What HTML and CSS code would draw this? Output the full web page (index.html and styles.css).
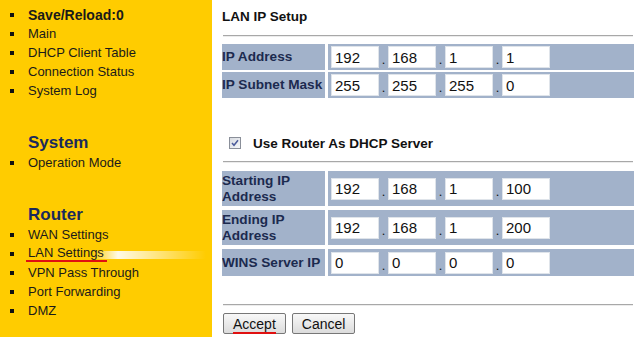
FILE: index.html
```html
<!DOCTYPE html>
<html lang="en">
<head>
  <meta charset="UTF-8">
  <title>LAN Settings</title>
  <link rel="stylesheet" href="styles.css">
</head>
<body>
  <div class="menu">
    <ul class="grupo">
      <li class="save">Save/Reload:0</li>
      <li>Main</li>
      <li>DHCP Client Table</li>
      <li>Connection Status</li>
      <li>System Log</li>
    </ul>
    <h3>System</h3>
    <ul class="grupo">
      <li>Operation Mode</li>
    </ul>
    <h3>Router</h3>
    <ul class="grupo">
      <li>WAN Settings</li>
      <li class="ativo"><span>LAN Settings</span></li>
      <li>VPN Pass Through</li>
      <li>Port Forwarding</li>
      <li>DMZ</li>
    </ul>
  </div>

  <div class="conteudo">
    <div class="titulo">LAN IP Setup</div>
    <div class="linha"></div>

    <table class="tabela t1">
      <tr>
        <td class="rotulo">IP Address</td>
        <td class="valor">
          <div class="ip">
            <input type="text" value="192"><span>.</span>
            <input type="text" value="168"><span>.</span>
            <input type="text" value="1"><span>.</span>
            <input type="text" value="1">
          </div>
        </td>
      </tr>
      <tr>
        <td class="rotulo">IP Subnet Mask</td>
        <td class="valor">
          <div class="ip">
            <input type="text" value="255"><span>.</span>
            <input type="text" value="255"><span>.</span>
            <input type="text" value="255"><span>.</span>
            <input type="text" value="0">
          </div>
        </td>
      </tr>
    </table>

    <label class="dhcp">
      <span class="caixa">
        <svg width="10" height="10" viewBox="0 0 10 10"><path d="M2 5 L4 7.3 L8 2.3" fill="none" stroke="#4a5a9a" stroke-width="1.5"/></svg>
      </span>
      Use Router As DHCP Server
    </label>
    <div class="linha"></div>

    <table class="tabela t2">
      <tr class="alto">
        <td class="rotulo">Starting IP<br>Address</td>
        <td class="valor">
          <div class="ip">
            <input type="text" value="192"><span>.</span>
            <input type="text" value="168"><span>.</span>
            <input type="text" value="1"><span>.</span>
            <input type="text" value="100">
          </div>
        </td>
      </tr>
      <tr class="alto">
        <td class="rotulo">Ending IP<br>Address</td>
        <td class="valor">
          <div class="ip">
            <input type="text" value="192"><span>.</span>
            <input type="text" value="168"><span>.</span>
            <input type="text" value="1"><span>.</span>
            <input type="text" value="200">
          </div>
        </td>
      </tr>
      <tr>
        <td class="rotulo">WINS Server IP</td>
        <td class="valor">
          <div class="ip">
            <input type="text" value="0"><span>.</span>
            <input type="text" value="0"><span>.</span>
            <input type="text" value="0"><span>.</span>
            <input type="text" value="0">
          </div>
        </td>
      </tr>
    </table>

    <div class="linha rodape"></div>
    <div class="botoes">
      <button class="marcado"><span>Accept</span></button>
      <button>Cancel</button>
    </div>
  </div>
</body>
</html>
```

FILE: styles.css
```css
body {
  margin: 0;
  font-family: "Liberation Sans", Arial, sans-serif;
  font-size: 13px;
  display: flex;
  height: 337px;
  overflow: hidden;
  background: white;
}

.menu {
  width: 212px;
  flex-shrink: 0;
  background-color: #ffcc00;
  padding-top: 5px;
  color: #1a1a1a;
}

.grupo {
  list-style: none;
  margin: 0;
  padding: 0;
}

.grupo li {
  display: flex;
  align-items: center;
  height: 19px;
  padding-left: 28px;
  position: relative;
}

.grupo li::before {
  content: '';
  position: absolute;
  left: 10px;
  top: 8px;
  width: 4px;
  height: 4px;
  background-color: #111;
}

.grupo li.save {
  font-weight: bold;
  font-size: 14px;
}

.grupo li.ativo {
  background: linear-gradient(90deg, rgba(255,255,255,0) 92px, rgba(255,255,255,0.9) 118px, rgba(255,255,255,0) 206px);
  background-size: 100% 8px;
  background-position: 0 7px;
  background-repeat: no-repeat;
}

.grupo li.ativo span {
  border-bottom: 2px solid #e01010;
  line-height: 15px;
  padding: 0 3px 0 2px;
  margin-left: -2px;
}

.menu h3 {
  margin: 0;
  padding: 3px 0 0 28px;
  font-size: 17px;
  line-height: 20px;
  color: #1a2a5c;
}

.menu ul + h3 {
  margin-top: 30px;
}

.conteudo {
  flex: 1;
  padding: 0 6px 0 10px;
}

.titulo {
  font-weight: bold;
  font-size: 13.5px;
  padding-top: 9px;
  line-height: 16px;
  color: #111;
}

.linha {
  border-top: 1px solid #a8a8a8;
  border-bottom: 1px solid #ececec;
  margin: 10px 1px 0 1px;
}

.tabela {
  border-spacing: 0 2px;
  width: 100%;
  margin-top: 5px;
  table-layout: fixed;
}

.tabela td {
  background-color: #a2b2ca;
  height: 26px;
  padding: 0;
}

.t2 {
  border-spacing: 0 4px;
  margin-top: 4px;
}

.tabela tr.alto td {
  height: 35px;
}

.t2 tr:last-child td {
  height: 27px;
}

.rotulo {
  width: 103px;
  padding-left: 1px;
  font-weight: bold;
  font-size: 13.6px;
  color: #1c2a4f;
  line-height: 16px;
  border-right: 3px solid white;
  white-space: nowrap;
  overflow: hidden;
}

.valor {
  padding-left: 3px !important;
}

.ip {
  display: flex;
  align-items: flex-end;
}

.ip input {
  width: 48px;
  height: 22px;
  box-sizing: border-box;
  border: 1px solid #dfe4ea;
  background: white;
  font-family: "Liberation Sans", Arial, sans-serif;
  font-size: 15px;
  padding: 0 3px;
  margin: 0;
  color: #111;
}

.ip span {
  width: 9px;
  text-align: center;
  line-height: 16px;
  color: #111;
}

.dhcp {
  display: flex;
  align-items: center;
  margin-top: 35px;
  padding-left: 7px;
  font-weight: bold;
  font-size: 13.5px;
  color: #111;
  height: 16px;
}

.caixa {
  width: 10px;
  height: 10px;
  border: 1px solid #8a8f99;
  background: linear-gradient(135deg, #d8dbe1, #f6f7f9);
  margin-right: 12px;
  display: flex;
}

.rodape {
  margin-top: 24px;
}

.botoes {
  display: flex;
  gap: 6px;
  margin-top: 7px;
  padding-left: 1px;
}

.botoes button {
  font-family: "Liberation Sans", Arial, sans-serif;
  font-size: 14px;
  height: 21px;
  padding: 0 9px;
  border: 1px solid #777;
  border-radius: 2px;
  background: linear-gradient(#f8f8f8, #dcdcdc);
  color: #111;
}

.botoes .marcado span {
  border-bottom: 2px solid #e01010;
  line-height: 14px;
}
```
